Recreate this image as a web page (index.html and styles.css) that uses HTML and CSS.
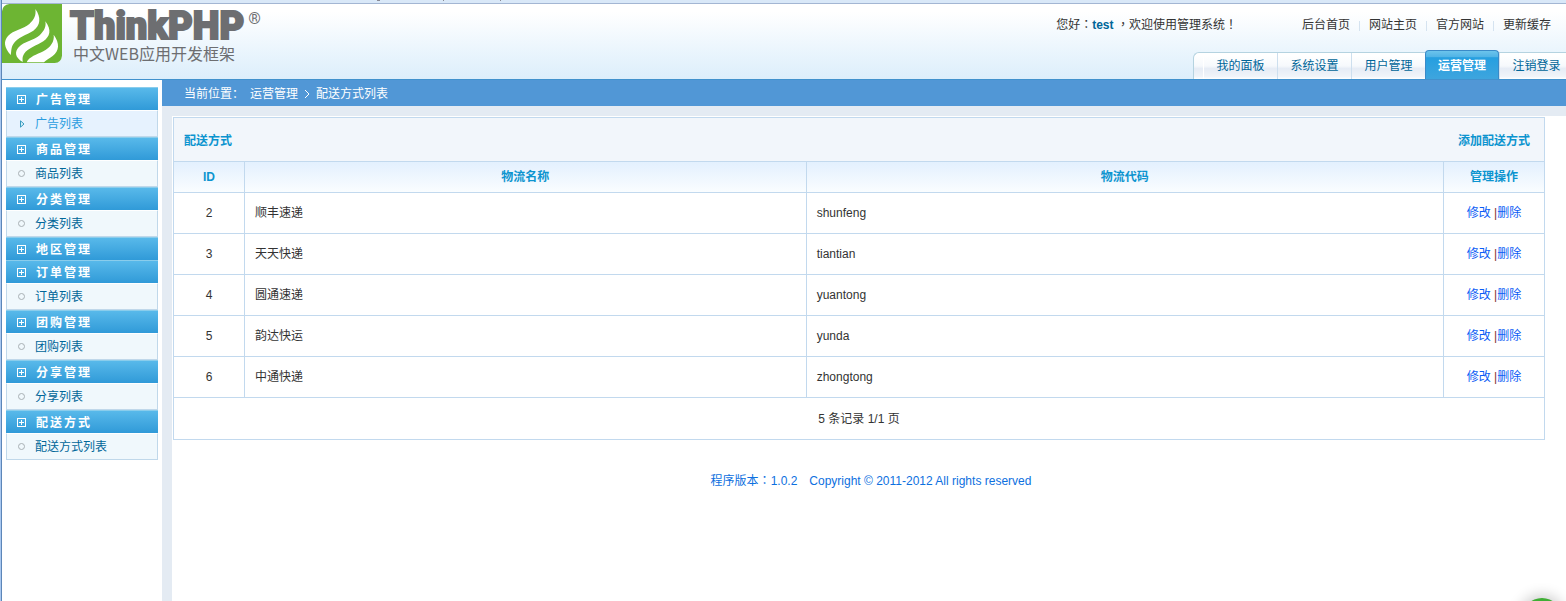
FILE: index.html
```html
<!DOCTYPE html>
<html lang="zh-CN">
<head>
<meta charset="utf-8">
<title>管理系统 - 配送方式列表</title>
<link rel="stylesheet" href="styles.css">
</head>
<body>
<div class="window">
  <div class="strip"><svg class="strip-marks" width="130" height="1" aria-hidden="true"><path fill="#8a8a94" d="M0 0h3v1H0zM66 0h1v1h-1zM123 0h1v1h-1z"/></svg></div>
  <header class="header">
    <div class="logo">
      <svg class="logo-icon" viewBox="0 0 180 177" aria-hidden="true">
        <defs><clipPath id="tile"><path d="M22 0H180V155Q178 175 158 177H0V22Q2 2 22 0Z"/></clipPath></defs>
        <g clip-path="url(#tile)">
          <rect width="180" height="177" fill="#6db533"/>
          <g fill="#fff">
            <path d="M100 15C118 40 116 64 94 80C74 93 46 100 34 120C26 133 29 142 26 153C6 130 4 112 18 96C34 78 64 76 82 60C96 47 103 34 100 15Z"/>
            <path d="M130 52C150 78 144 98 124 112C104 125 78 132 66 150C60 160 62 166 62 174C38 160 38 144 50 130C66 112 96 110 113 94C127 80 133 68 130 52Z"/>
            <path d="M155 92C174 118 172 140 152 156C142 164 132 168 126 175H74C82 158 104 152 124 142C146 130 158 112 155 92Z"/>
          </g>
        </g>
      </svg>
      <div class="logo-words">
        <div class="logo-name">ThinkPHP<span class="logo-reg">®</span></div>
        <div class="logo-tag">中文WEB应用开发框架</div>
      </div>
    </div>
    <div class="header-right">
      <div class="userbar">
        <p class="greeting">您好<span class="punct" lang="zh-TW">：</span><strong>test</strong> <span class="punct" lang="zh-TW">，</span>欢迎使用管理系统<span class="punct" lang="zh-TW">！</span></p>
        <nav class="links"><a href="#">后台首页</a><a href="#">网站主页</a><a href="#">官方网站</a><a href="#">更新缓存</a></nav>
      </div>
      <nav class="tabs"><a href="#">我的面板</a><a href="#">系统设置</a><a href="#">用户管理</a><a href="#" class="active">运营管理</a><a href="#">注销登录</a></nav>
    </div>
  </header>
  <div class="body">
    <aside class="sidebar">
      <h3>广告管理</h3>
      <ul><li class="current"><svg width="5" height="8" viewBox="0 0 5 8" aria-hidden="true"><path d="M.5 .8V7.2L4 4Z" fill="#d5eef8" stroke="#3a9cc0"/></svg><a href="#">广告列表</a></li></ul>
      <h3>商品管理</h3>
      <ul><li><a href="#">商品列表</a></li></ul>
      <h3>分类管理</h3>
      <ul><li><a href="#">分类列表</a></li></ul>
      <h3>地区管理</h3>
      <h3>订单管理</h3>
      <ul><li><a href="#">订单列表</a></li></ul>
      <h3>团购管理</h3>
      <ul><li><a href="#">团购列表</a></li></ul>
      <h3>分享管理</h3>
      <ul><li><a href="#">分享列表</a></li></ul>
      <h3>配送方式</h3>
      <ul><li><a href="#">配送方式列表</a></li></ul>
    </aside>
    <div class="content">
      <div class="crumbs"><span class="crumb-label">当前位置：</span><span>运营管理</span><svg class="chevron" width="6" height="10" viewBox="0 0 6 10" aria-hidden="true"><path d="M1 1l4 4-4 4" fill="none" stroke="#fff"/></svg><span>配送方式列表</span></div>
      <main class="main">
        <section class="panel">
          <div class="panel-head"><h2>配送方式</h2><a href="#">添加配送方式</a></div>
          <table class="grid">
            <colgroup><col class="col-id"><col class="col-name"><col><col class="col-ops"></colgroup>
            <thead><tr><th>ID</th><th>物流名称</th><th>物流代码</th><th>管理操作</th></tr></thead>
            <tbody>
              <tr><td>2</td><td>顺丰速递</td><td>shunfeng</td><td><a href="#">修改</a> |<a href="#">删除</a></td></tr>
              <tr><td>3</td><td>天天快递</td><td>tiantian</td><td><a href="#">修改</a> |<a href="#">删除</a></td></tr>
              <tr><td>4</td><td>圆通速递</td><td>yuantong</td><td><a href="#">修改</a> |<a href="#">删除</a></td></tr>
              <tr><td>5</td><td>韵达快运</td><td>yunda</td><td><a href="#">修改</a> |<a href="#">删除</a></td></tr>
              <tr><td>6</td><td>中通快递</td><td>zhongtong</td><td><a href="#">修改</a> |<a href="#">删除</a></td></tr>
            </tbody>
          </table>
          <div class="pager">5 条记录 1/1 页</div>
        </section>
        <footer class="footer"><span>程序版本<span class="punct" lang="zh-TW">：</span>1.0.2</span><span>Copyright © 2011-2012 All rights reserved</span></footer>
      </main>
    </div>
  </div>
  <div class="bubble"></div>
</div>
</body>
</html>
```
FILE: styles.css
```css
*, *::before { box-sizing: border-box; }
body {
  margin: 0;
  color: #333;
  font: 12px/18px "Liberation Sans", "Noto Sans CJK SC", sans-serif;
  background: #fff;
}
a { color: inherit; text-decoration: none; }
h2, h3, p, ul { margin: 0; padding: 0; font-size: 12px; }
ul { list-style: none; }
.punct { font-family: "Liberation Sans", "Noto Sans CJK TC", sans-serif; }

.window {
  position: relative;
  display: flex;
  flex-direction: column;
  min-height: 100vh;
  overflow: hidden;
  border-left: 1px solid #a9c8f0;
}
.window::before {
  content: "";
  position: absolute;
  top: 0;
  bottom: 0;
  left: 0;
  width: 1px;
  background: #5c86b8;
}
.strip { height: 4px; background: #d9e8f8; border-bottom: 1px solid #a3b6d3; }
.strip-marks { display: block; margin-left: 376px; }

.header {
  display: flex;
  justify-content: space-between;
  height: 76px;
  padding-left: 1px;
  background: linear-gradient(#fff 10%, #dceefb);
  border-bottom: 1px solid #4191cd;
}
.logo { display: flex; gap: 8px; }
.logo-icon { width: 60px; height: 59px; }
.logo-words { color: #6d6e71; white-space: nowrap; }
.logo-name {
  display: flex;
  height: 39px;
  font: 900 38px/44px Roboto, sans-serif;
  -webkit-text-stroke: 2px #6d6e71;
}
.logo-reg { margin-left: 4px; font: 16px/30px Roboto, sans-serif; -webkit-text-stroke: 0; }
.logo-tag { padding-left: 3px; font: 16px/20px "Noto Sans CJK SC", sans-serif; }

.header-right {
  display: flex;
  flex-direction: column;
  justify-content: space-between;
  align-items: flex-end;
}
.userbar { display: flex; align-items: baseline; gap: 65px; padding: 12px 15px 0 0; }
.greeting strong { color: #069; }
.links { display: flex; }
.links a + a { margin-left: 9px; padding-left: 10px; background: linear-gradient(#d5e3f0, #d5e3f0) 0 5px / 1px 10px no-repeat; }

.tabs {
  display: flex;
  align-items: flex-end;
  height: 27px;
  margin-right: -7px;
  padding-left: 9px;
  border: 1px solid #b5d3e0;
  border-width: 1px 0 0 1px;
  border-radius: 6px 0 0 0;
  background: linear-gradient(#fff 10%, #f6f9fc 50%, #e6ecf5 60%, #f0f4f9 90%, #fff);
}
.tabs a {
  width: 74px;
  height: 26px;
  line-height: 26px;
  text-align: center;
  color: #069;
  border-left: 1px solid #fff;
}
.tabs a + a { border-left-color: #cddfee; }
.tabs .active {
  height: 29px;
  line-height: 30px;
  font-weight: bold;
  color: #fff;
  border: 1px solid #3a8ac8;
  border-bottom: 0;
  border-radius: 4px 4px 0 0;
  background: linear-gradient(#6cc4ec, #52b4e6 20%, #269fe0 24%, #3ea5de);
}

.body { display: flex; flex: 1; }
.sidebar { flex: none; width: 161px; padding: 7px 4px 0 5px; }
.sidebar h3 {
  position: relative;
  height: 23px;
  padding-left: 30px;
  line-height: 24px;
  letter-spacing: 2px;
  color: #fff;
  border-top: 1px solid #8acdec;
  background: linear-gradient(#58b9ea, #309ad8);
}
.sidebar h3::before {
  content: "";
  position: absolute;
  left: 11px;
  top: 7px;
  width: 9px;
  height: 9px;
  border: 1px solid #fff;
  background:
    linear-gradient(#fff, #fff) center / 1px 5px no-repeat,
    linear-gradient(#fff, #fff) center / 5px 1px no-repeat;
}
.sidebar ul { border: 1px solid #c0d8ea; border-top-color: #fff; background: #f0f8fc; }
.sidebar li { display: flex; align-items: center; height: 25px; padding-left: 11px; color: #069; }
.sidebar li::before {
  content: "";
  width: 7px;
  height: 7px;
  margin-right: 10px;
  border: 1px solid #a8b0b4;
  border-radius: 50%;
}
.sidebar .current { color: #2a9de0; background: #e6f2fe; }
.sidebar .current::before { display: none; }
.sidebar .current svg { margin: 0 10px 0 2px; }

.content { display: flex; flex: 1; flex-direction: column; min-width: 0; }
.crumbs { display: flex; align-items: center; height: 26px; padding: 1px 0 0 22px; color: #fff; background: #5197d6; }
.crumb-label { margin-right: 6px; }
.chevron { margin: 0 6px; }
.main {
  flex: 1;
  padding: 11px 21px 0 1px;
  border-left: 10px solid #e4ebf3;
  background: linear-gradient(#e4ebf3, #e4ebf3) 0 0 / 100% 10px no-repeat;
}
.panel { border: 1px solid #c2d9ee; }
.panel-head {
  display: flex;
  justify-content: space-between;
  align-items: center;
  height: 43px;
  padding: 2px 14px 0 10px;
  font-weight: bold;
  color: #0c94cf;
  background: #f2f6fb;
}
.grid { width: 100%; table-layout: fixed; border-collapse: separate; border-spacing: 0; }
.col-id { width: 71px; }
.col-name { width: 41%; }
.col-ops { width: 100px; }
.grid th {
  height: 32px;
  padding: 0;
  color: #0c94cf;
  border: 1px solid #c2d9ee;
  border-left: 0;
  background: linear-gradient(#e3f0fe, #fafdff);
}
.grid td { height: 41px; padding: 0 10px; border: 1px solid #c2d9ee; border-width: 0 1px 1px 0; }
.grid th:last-child, .grid td:last-child { border-right: 0; }
.grid td:first-child, .grid td:last-child { text-align: center; }
.grid td:last-child { color: #803030; }
.grid a { color: #0b5cf5; }
.pager { height: 41px; line-height: 42px; text-align: center; }
.footer { display: flex; justify-content: center; align-items: baseline; gap: 12px; padding: 32px 0 20px 24px; color: #0d70e0; }

.bubble {
  position: absolute;
  right: 4px;
  bottom: -37px;
  width: 40px;
  height: 40px;
  border-radius: 50%;
  background: #3fae35;
  box-shadow: 0 0 14px 3px rgba(0, 0, 0, 0.2);
}
```
